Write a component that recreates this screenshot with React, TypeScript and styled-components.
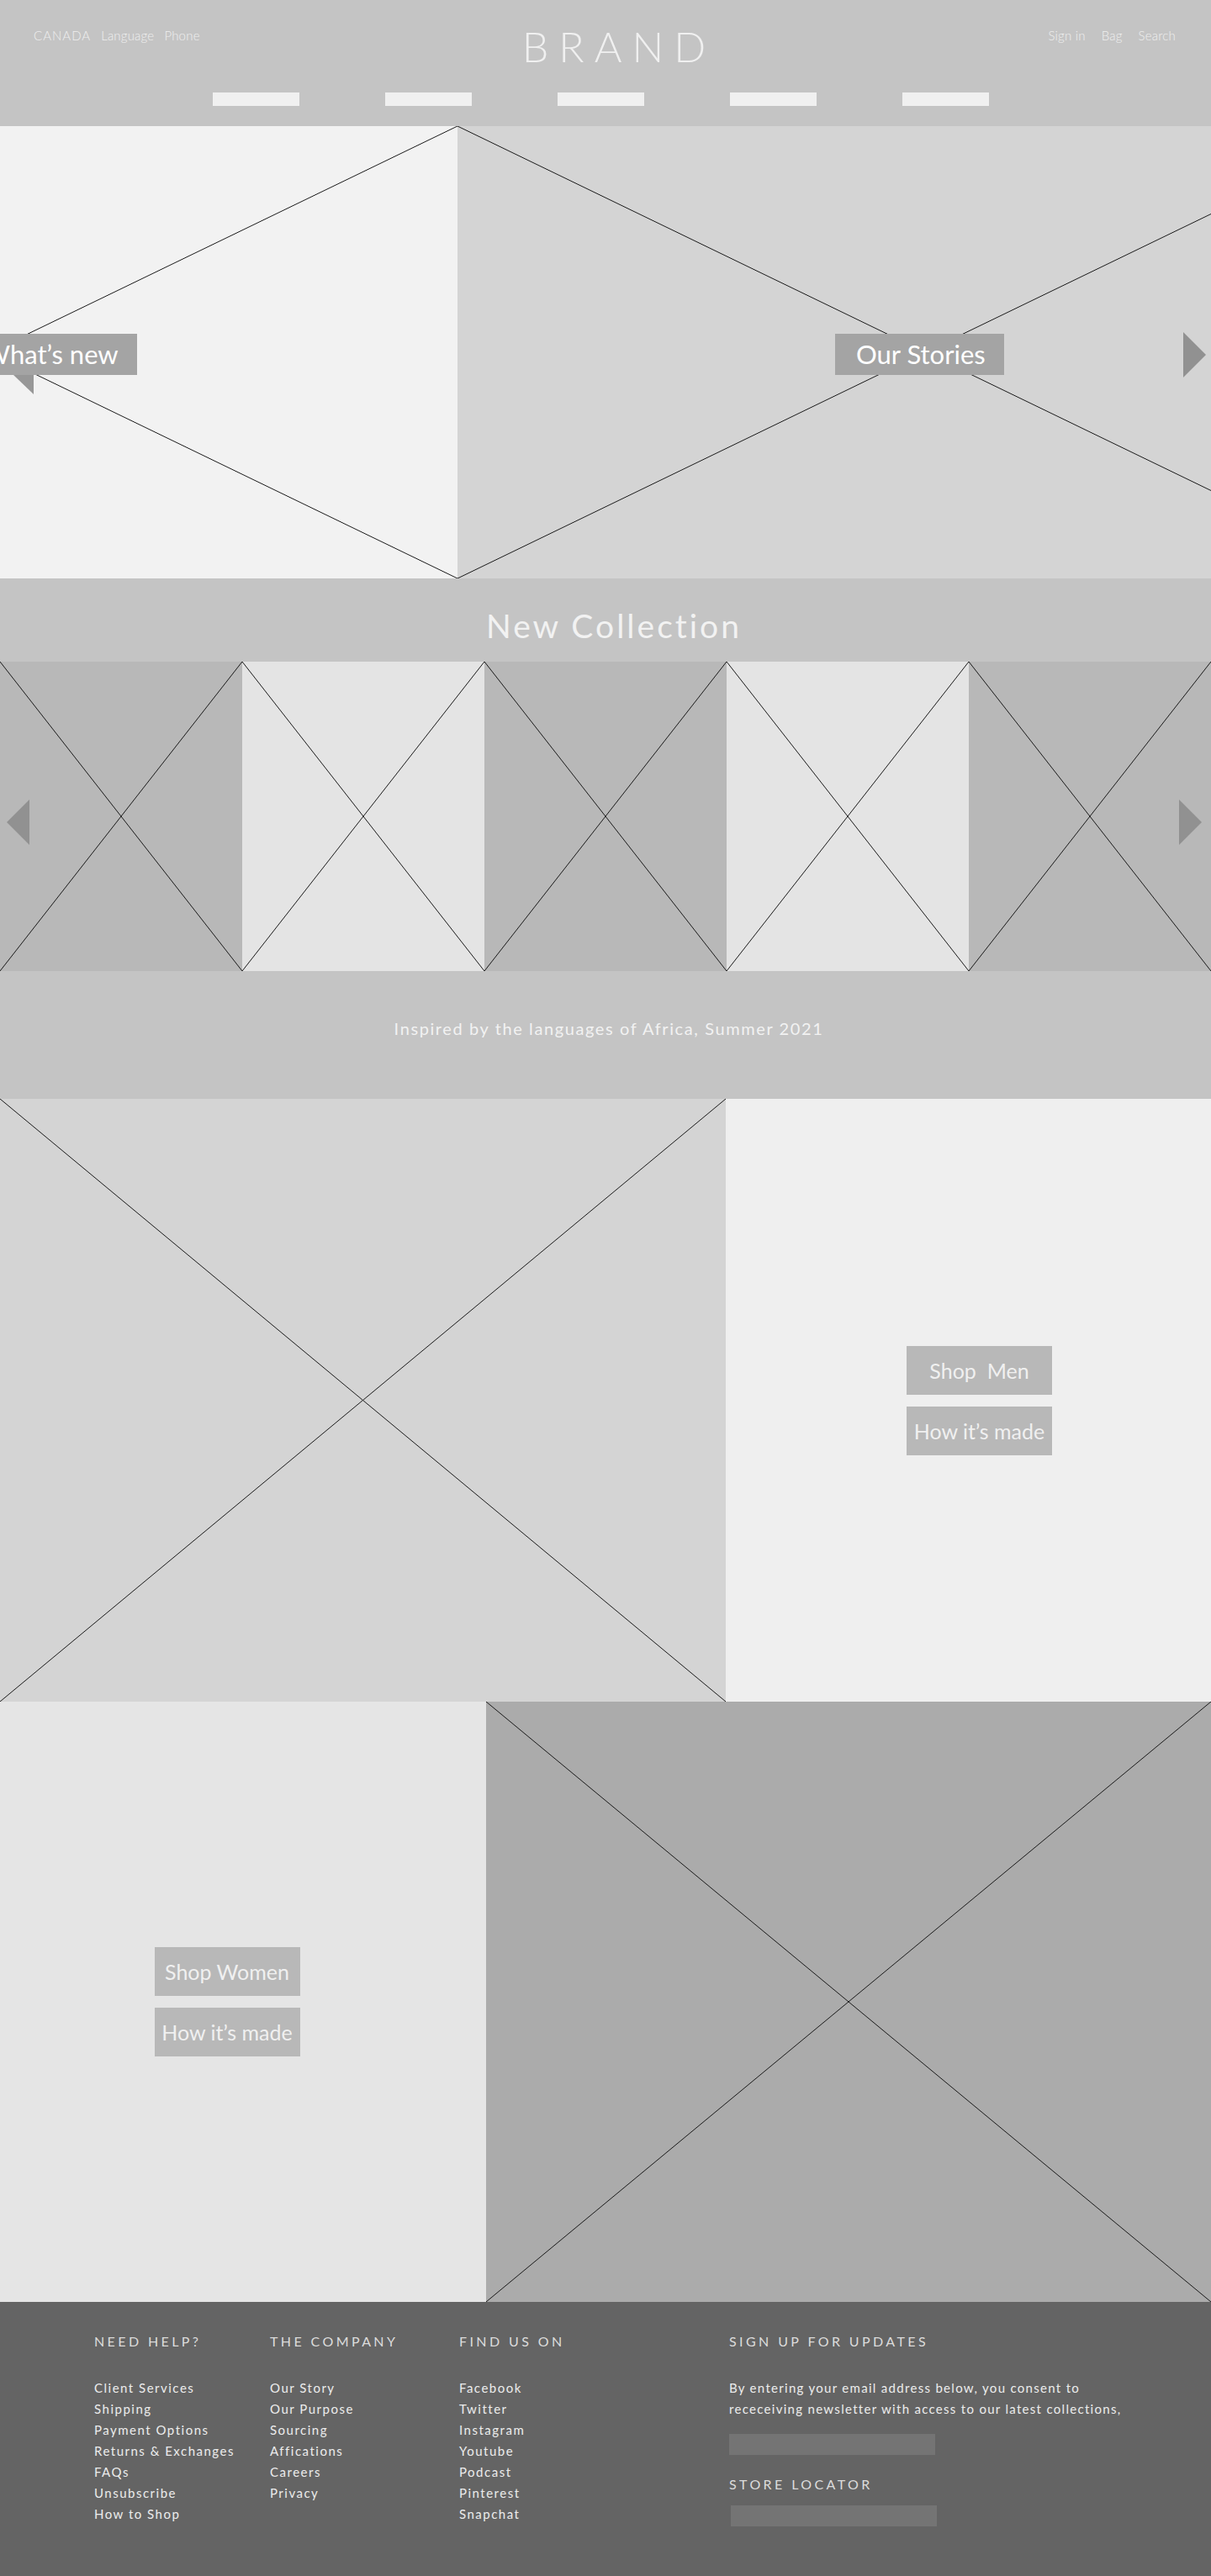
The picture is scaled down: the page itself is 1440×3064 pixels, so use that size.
import React from 'react';
import styled, { createGlobalStyle } from 'styled-components';

const GlobalStyle = createGlobalStyle`
  html, body {
    margin: 0;
    padding: 0;
    background: #c4c4c4;
  }
  body {
    font-family: Lato, "Noto Sans", "Open Sans", sans-serif;
    font-weight: 300;
  }
  * {
    box-sizing: border-box;
  }
`;

const Page = styled.div`
  width: 1440px;
  overflow: hidden;
`;

/* ---------- header ---------- */

const Header = styled.header`
  height: 150px;
  background: #c4c4c4;
  padding: 25px 42px 0 40px;
`;

const TopRow = styled.div`
  display: grid;
  grid-template-columns: 1fr auto 1fr;
  align-items: start;
  height: 85px;
`;

const SmallLinks = styled.div<{ $right?: boolean }>`
  display: flex;
  gap: ${p => (p.$right ? '19px' : '12px')};
  justify-content: ${p => (p.$right ? 'flex-end' : 'flex-start')};
  padding-top: 8px;
  font-size: 15px;
  color: #efefef;
  letter-spacing: 0.2px;
`;

const Brand = styled.div`
  font-size: 50px;
  font-weight: 300;
  letter-spacing: 12px;
  color: #f0f0f0;
  line-height: 1;
  margin-left: 34px;
  padding-top: 5px;
`;

const Nav = styled.nav`
  display: flex;
  justify-content: center;
  gap: 102px;
  margin-left: -40px;
  margin-right: -42px;
  padding-right: 12px;
`;

const NavBar = styled.span`
  display: block;
  width: 103px;
  height: 16px;
  background: #f0f0f0;
`;

/* ---------- hero ---------- */

const Hero = styled.section`
  position: relative;
  height: 538px;
  overflow: hidden;
`;

const HeroTrack = styled.div`
  display: flex;
  height: 100%;
  margin-left: -568px;
`;

const HeroSlide = styled.div<{ $bg: string }>`
  position: relative;
  flex: 0 0 1112px;
  height: 100%;
  background: ${p => p.$bg};
`;

const Cross = styled.svg`
  display: block;
  width: 100%;
  height: 100%;
`;

const SlideTag = styled.div<{ $left: number; $fold?: boolean }>`
  position: absolute;
  top: 247px;
  left: ${p => p.$left}px;
  height: 49px;
  padding: 0 22px 0 25px;
  background: #a4a4a4;
  color: #ffffff;
  font-size: 31px;
  font-weight: 400;
  line-height: 49px;
  white-space: nowrap;
  &::after {
    content: '';
    display: ${p => (p.$fold ? 'block' : 'none')};
    position: absolute;
    left: 61px;
    top: 49px;
    border-top: 23px solid #979797;
    border-left: 24px solid transparent;
  }
`;

const Arrow = styled.span<{ $dir: 'left' | 'right'; $top: number; $offset: number }>`
  position: absolute;
  top: ${p => p.$top}px;
  ${p => p.$dir}: ${p => p.$offset}px;
  width: 0;
  height: 0;
  border-top: 27px solid transparent;
  border-bottom: 27px solid transparent;
  ${p => (p.$dir === 'right' ? 'border-left' : 'border-right')}: 27px solid #919191;
`;

/* ---------- collection ---------- */

const Band = styled.div<{ $h: number; $size: number; $spacing: number; $lift: number; $nudge?: number }>`
  height: ${p => p.$h}px;
  display: flex;
  align-items: center;
  justify-content: center;
  padding-bottom: ${p => (p.$lift > 0 ? p.$lift : 0)}px;
  padding-top: ${p => (p.$lift < 0 ? -p.$lift : 0)}px;
  padding-left: ${p => p.$nudge ?? 0}px;
  background: #c4c4c4;
  color: #f2f2f2;
  font-size: ${p => p.$size}px;
  letter-spacing: ${p => p.$spacing}px;
  font-weight: 400;
`;

const Strip = styled.section`
  position: relative;
  display: grid;
  grid-template-columns: repeat(5, 1fr);
  grid-template-rows: 368px;
  height: 368px;
`;

const Tile = styled.div<{ $bg: string }>`
  background: ${p => p.$bg};
  overflow: hidden;
`;

/* ---------- shop sections ---------- */

const Split = styled.section<{ $cols: string; $h: number }>`
  display: grid;
  grid-template-columns: ${p => p.$cols};
  grid-template-rows: ${p => p.$h}px;
  height: ${p => p.$h}px;
`;

const Picture = styled.div<{ $bg: string }>`
  background: ${p => p.$bg};
  overflow: hidden;
`;

const ButtonPanel = styled.div<{ $bg: string; $shift: number }>`
  background: ${p => p.$bg};
  display: flex;
  flex-direction: column;
  align-items: center;
  justify-content: center;
  gap: 14px;
  padding-left: ${p => (p.$shift > 0 ? p.$shift * 2 : 0)}px;
  padding-right: ${p => (p.$shift < 0 ? -p.$shift * 2 : 0)}px;
`;

const ShopButton = styled.button`
  width: 173px;
  height: 58px;
  border: none;
  background: #b8b8b8;
  color: #f0f0f0;
  font-family: inherit;
  font-size: 25px;
  font-weight: 400;
  padding: 0;
  white-space: pre;
`;

/* ---------- footer ---------- */

const Footer = styled.footer`
  height: 326px;
  background: #646464;
  padding: 37px 0 0 112px;
  display: grid;
  grid-template-columns: 209px 225px 321px 1fr;
  align-items: start;
`;

const FooterCol = styled.div``;

const FooterHeading = styled.div<{ $gap?: number }>`
  font-size: 16px;
  line-height: 20px;
  letter-spacing: 3.4px;
  color: #dcdcdc;
  font-weight: 400;
  margin-bottom: ${p => p.$gap ?? 33}px;
`;

const LinkList = styled.ul`
  list-style: none;
  margin: 0;
  padding: 0;
`;

const LinkItem = styled.li`
  font-size: 15px;
  line-height: 25px;
  letter-spacing: 1.5px;
  color: #ececec;
  font-weight: 400;
  white-space: nowrap;
`;

const Consent = styled.p`
  margin: 0 0 17px;
  font-size: 15px;
  line-height: 25px;
  letter-spacing: 1.3px;
  color: #ececec;
  font-weight: 400;
  white-space: nowrap;
`;

const FieldBox = styled.div<{ $indent?: number }>`
  width: 245px;
  height: 25px;
  background: #747474;
  margin-left: ${p => p.$indent ?? 0}px;
  margin-bottom: 25px;
`;

const XLines = ({ stroke = '#1a1a1a' }: { stroke?: string }) => (
  <Cross viewBox="0 0 100 100" preserveAspectRatio="none">
    <line x1="0" y1="0" x2="100" y2="100" stroke={stroke} strokeWidth="1" vectorEffect="non-scaling-stroke" />
    <line x1="0" y1="100" x2="100" y2="0" stroke={stroke} strokeWidth="1" vectorEffect="non-scaling-stroke" />
  </Cross>
);

const tileColors = ['#b8b8b8', '#e4e4e4', '#b8b8b8', '#e4e4e4', '#b8b8b8'];

const helpLinks = ['Client Services', 'Shipping', 'Payment Options', 'Returns & Exchanges', 'FAQs', 'Unsubscribe', 'How to Shop'];
const companyLinks = ['Our Story', 'Our Purpose', 'Sourcing', 'Affications', 'Careers', 'Privacy'];
const socialLinks = ['Facebook', 'Twitter', 'Instagram', 'Youtube', 'Podcast', 'Pinterest', 'Snapchat'];

export default function App() {
  return (
    <Page>
      <GlobalStyle />
      <Header>
        <TopRow>
          <SmallLinks>
            <span style={{ letterSpacing: '1px' }}>CANADA</span>
            <span>Language</span>
            <span>Phone</span>
          </SmallLinks>
          <Brand>BRAND</Brand>
          <SmallLinks $right>
            <span>Sign in</span>
            <span>Bag</span>
            <span>Search</span>
          </SmallLinks>
        </TopRow>
        <Nav>
          {[0, 1, 2, 3, 4].map(i => (
            <NavBar key={i} />
          ))}
        </Nav>
      </Header>

      <Hero>
        <HeroTrack>
          <HeroSlide $bg="#f2f2f2">
            <XLines />
            <SlideTag $left={523} $fold>What’s new</SlideTag>
          </HeroSlide>
          <HeroSlide $bg="#d4d4d4">
            <XLines />
            <SlideTag $left={449}>Our Stories</SlideTag>
          </HeroSlide>
        </HeroTrack>
        <Arrow $dir="right" $top={245} $offset={6} />
      </Hero>

      <Band $h={99} $size={39} $spacing={3} $lift={-12} $nudge={20}>New Collection</Band>

      <Strip>
        {tileColors.map((c, i) => (
          <Tile key={i} $bg={c}>
            <XLines />
          </Tile>
        ))}
        <Arrow $dir="left" $top={164} $offset={8} />
        <Arrow $dir="right" $top={164} $offset={11} />
      </Strip>

      <Band $h={152} $size={20} $spacing={1.6} $lift={16} $nudge={8}>
        Inspired by the languages of Africa, Summer 2021
      </Band>

      <Split $cols="863px 1fr" $h={717}>
        <Picture $bg="#d4d4d4">
          <XLines />
        </Picture>
        <ButtonPanel $bg="#efefef" $shift={13}>
          <ShopButton>{'Shop  Men'}</ShopButton>
          <ShopButton>How it’s made</ShopButton>
        </ButtonPanel>
      </Split>

      <Split $cols="578px 1fr" $h={714}>
        <ButtonPanel $bg="#e5e5e5" $shift={-19}>
          <ShopButton>Shop Women</ShopButton>
          <ShopButton>How it’s made</ShopButton>
        </ButtonPanel>
        <Picture $bg="#ababab">
          <XLines />
        </Picture>
      </Split>

      <Footer>
        <FooterCol>
          <FooterHeading>NEED HELP?</FooterHeading>
          <LinkList>
            {helpLinks.map(l => (
              <LinkItem key={l}>{l}</LinkItem>
            ))}
          </LinkList>
        </FooterCol>
        <FooterCol>
          <FooterHeading>THE COMPANY</FooterHeading>
          <LinkList>
            {companyLinks.map(l => (
              <LinkItem key={l}>{l}</LinkItem>
            ))}
          </LinkList>
        </FooterCol>
        <FooterCol>
          <FooterHeading>FIND US ON</FooterHeading>
          <LinkList>
            {socialLinks.map(l => (
              <LinkItem key={l}>{l}</LinkItem>
            ))}
          </LinkList>
        </FooterCol>
        <FooterCol>
          <FooterHeading>SIGN UP FOR UPDATES</FooterHeading>
          <Consent>
            By entering your email address below, you consent to
            <br />
            receceiving newsletter with access to our latest collections,
          </Consent>
          <FieldBox />
          <FooterHeading $gap={15}>STORE LOCATOR</FooterHeading>
          <FieldBox $indent={2} />
        </FooterCol>
      </Footer>
    </Page>
  );
}
